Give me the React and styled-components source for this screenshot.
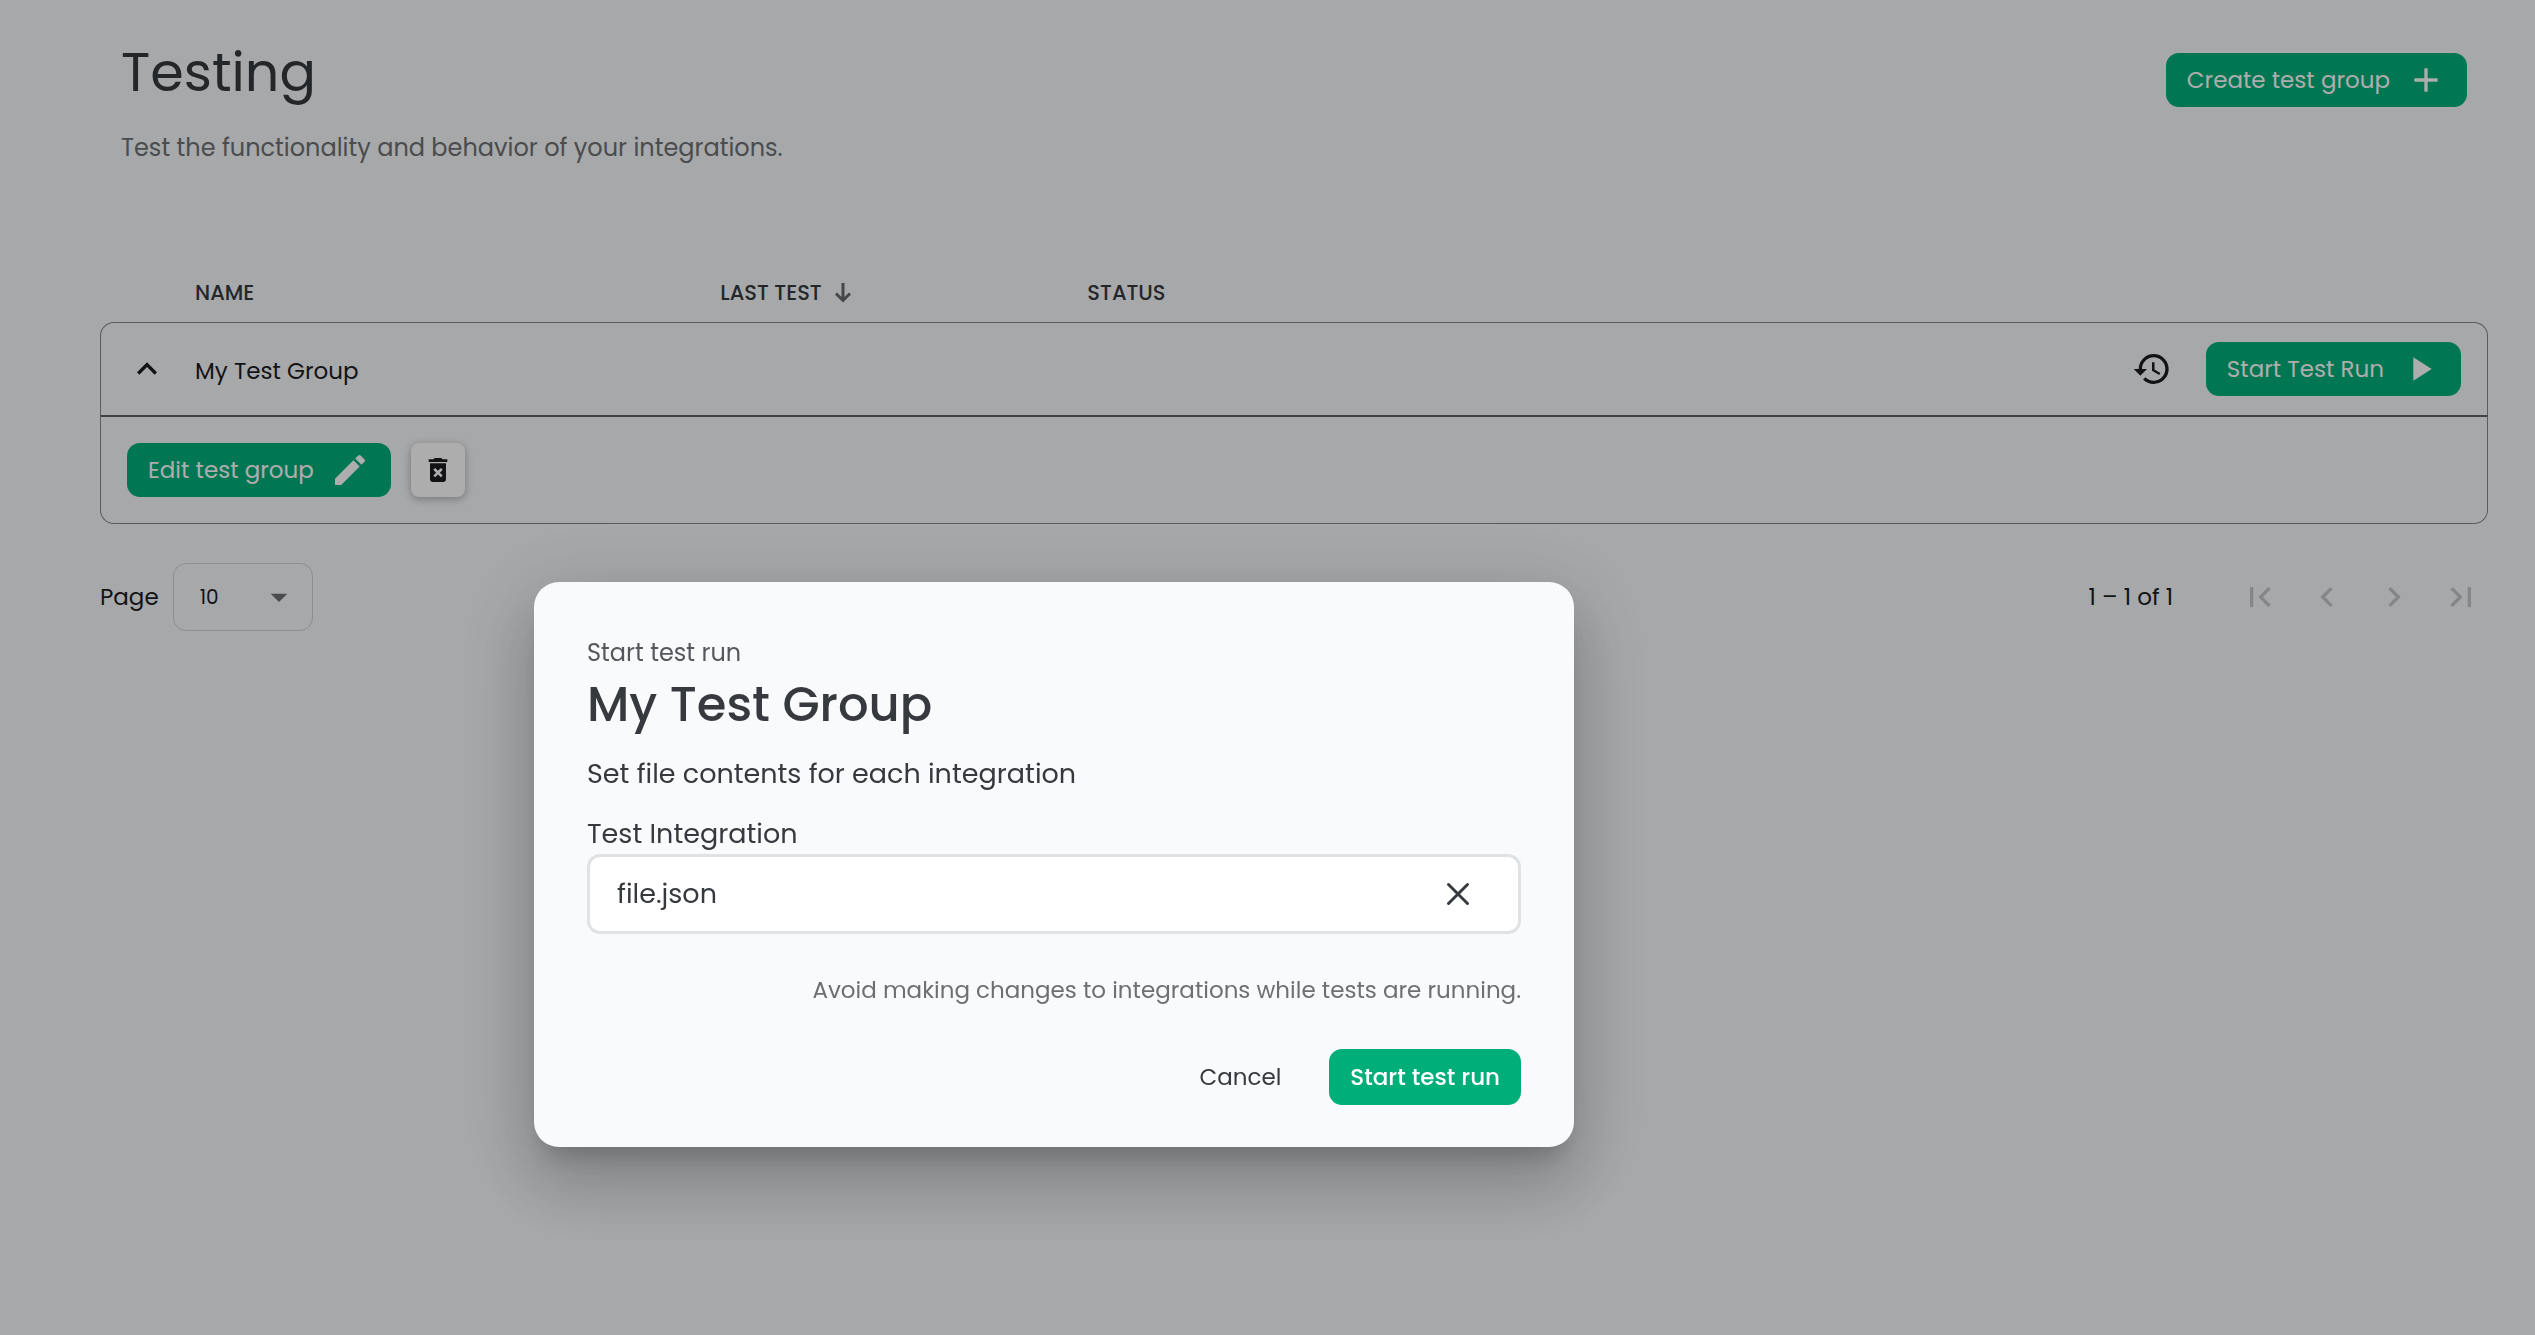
import React, { useState } from "react";
import styled, { createGlobalStyle, css } from "styled-components";
import {
  MdAdd,
  MdArrowDropDown,
  MdChevronLeft,
  MdChevronRight,
  MdDeleteForever,
  MdEdit,
  MdExpandLess,
  MdFirstPage,
  MdHistory,
  MdLastPage,
  MdPlayArrow,
} from "react-icons/md";

const color = {
  page: "#f6f8fb",
  dialog: "#f9fafc",
  green: "#00ae7a",
  ink: "#363a3e",
  muted: "#6d7073",
  line: "#85878b",
};

const GlobalStyle = createGlobalStyle`
  *, *::before, *::after { box-sizing: border-box; }
  body {
    margin: 0;
    background: ${color.page};
    color: ${color.ink};
    font-family: Poppins, Inter, "Open Sans", sans-serif;
    font-size: 24px;
    line-height: 36px;
  }
  button, input, select { font: inherit; color: inherit; }
  button { border: 0; background: none; padding: 0; cursor: pointer; }
  svg { display: block; flex: none; }
`;

const Page = styled.main`
  min-height: 100vh;
  padding: 40px 47px 40px 100px;
`;

const PageHeader = styled.header`
  display: flex;
  justify-content: space-between;
  align-items: flex-start;
  padding: 0 21px;
  margin-bottom: 98px;
`;

const PageTitle = styled.h1`
  margin: 0 0 26px;
  font-size: 54px;
  font-weight: 400;
  line-height: 64px;
`;

const Subtitle = styled.p`
  margin: 0;
  color: ${color.muted};
`;

const HeaderActions = styled.div`
  padding-top: 13px;
`;

const PrimaryButton = styled.button`
  display: inline-flex;
  align-items: center;
  gap: 16px;
  height: 54px;
  padding: 0 21px;
  border-radius: 13px;
  background: ${color.green};
  color: #fff;
  font-size: 23px;
  white-space: nowrap;
  ${(p) =>
    p.$strong &&
    css`
      height: 56px;
      font-weight: 500;
    `}
`;

const SquareButton = styled.button`
  display: grid;
  place-items: center;
  width: 54px;
  height: 54px;
  border-radius: 8px;
  background: #fff;
  color: #1c1d1f;
  box-shadow: 0 2px 8px rgba(0, 0, 0, 0.3);
`;

const IconButton = styled.button`
  display: grid;
  place-items: center;
  width: 40px;
  height: 40px;
  color: #1c1d1f;
`;

const GroupTable = styled.table`
  width: 100%;
  table-layout: fixed;
  border-collapse: separate;
  border-spacing: 0;
  text-align: left;
`;

const Col = styled.col`
  width: ${(p) => p.$width};
`;

const HeadCell = styled.th`
  padding: 13px 0;
  font-size: 21px;
  font-weight: 500;
  line-height: 32px;
`;

const SortLabel = styled.button`
  display: inline-flex;
  align-items: center;
  gap: 12px;
`;

const Cell = styled.td`
  height: 93px;
  padding: 0;
  border-top: 1px solid ${color.line};
  color: #1c1d1f;
  &:first-child {
    padding-left: 26px;
    border-left: 1px solid ${color.line};
    border-top-left-radius: 14px;
  }
  &:last-child {
    padding-right: 26px;
    border-right: 1px solid ${color.line};
    border-top-right-radius: 14px;
  }
`;

const NameCell = styled(Cell)`
  padding-top: 4px;
  font-size: 23px;
`;

const DetailCell = styled.td`
  padding: 26px;
  border: 1px solid ${color.line};
  border-top: 2px solid #606266;
  border-radius: 0 0 14px 14px;
`;

const Actions = styled.div`
  display: flex;
  align-items: center;
  justify-content: ${(p) => (p.$end ? "flex-end" : "flex-start")};
  gap: ${(p) => p.$gap}px;
`;

const Pager = styled.nav`
  display: flex;
  align-items: center;
  justify-content: space-between;
  margin-top: 39px;
  color: #1c1d1f;
  font-size: 23px;
`;

const PageSize = styled.label`
  display: flex;
  align-items: center;
  gap: 14px;
`;

const SelectBox = styled.span`
  display: grid;
  align-items: center;
  > * {
    grid-area: 1 / 1;
  }
  > svg {
    justify-self: end;
    margin-right: 14px;
    color: #6d7073;
    pointer-events: none;
  }
`;

const Select = styled.select`
  appearance: none;
  width: 140px;
  height: 68px;
  padding: 0 26px;
  border: 1px solid #cdd0d3;
  border-radius: 13px;
  background: transparent;
  font-size: 20px;
`;

const PagerControls = styled.div`
  display: flex;
  align-items: center;
  gap: 27px;
  padding-right: 7px;
`;

const Range = styled.span`
  margin-right: 40px;
`;

const PageButton = styled(IconButton)`
  color: #c4c6c8;
  &:disabled {
    cursor: default;
  }
`;

/* The dialog is centred in the area left of the side inset and below the top inset. */
const Backdrop = styled.div`
  position: fixed;
  inset: 0;
  display: grid;
  place-items: center;
  padding: 394px 427px 0 0;
  background: rgba(0, 0, 0, 0.32);
`;

const Dialog = styled.section`
  width: 1040px;
  max-width: 100%;
  padding: 53px 53px 42px;
  border-radius: 25px;
  background: ${color.dialog};
  box-shadow:
    0 18px 25px -12px rgba(0, 0, 0, 0.2),
    0 40px 63px 5px rgba(0, 0, 0, 0.14),
    0 15px 77px 13px rgba(0, 0, 0, 0.12);
`;

const Eyebrow = styled.p`
  margin: 0 0 4px;
  color: #54585c;
`;

const DialogTitle = styled.h2`
  margin: 0 0 19px;
  font-size: 48px;
  font-weight: 500;
  line-height: 60px;
`;

const Instruction = styled.p`
  margin: 0 0 20px;
  font-size: 27px;
  line-height: 40px;
`;

const FieldLabel = styled.label`
  display: block;
  font-size: 27px;
  line-height: 40px;
`;

const Field = styled.div`
  display: flex;
  align-items: center;
  height: 80px;
  padding: 0 40px 0 27px;
  border: 3px solid #e0e2e3;
  border-radius: 13px;
  background: #fff;
`;

const FieldInput = styled.input`
  flex: 1;
  min-width: 0;
  padding: 0;
  border: 0;
  outline: 0;
  background: none;
  font-size: 27px;
  line-height: 40px;
`;

const Warning = styled.p`
  margin: 38px 0 41px;
  color: ${color.muted};
  font-size: 23px;
  text-align: right;
`;

const CancelButton = styled.button`
  font-size: 23px;
`;

function SortArrow() {
  return (
    <svg width="18" height="20" viewBox="0 0 18 20" fill="none" stroke="#66696c" strokeWidth="3">
      <path d="M9 0v17M2 10.5l7 7 7-7" />
    </svg>
  );
}

function CloseIcon() {
  return (
    <svg width="24" height="24" viewBox="0 0 24 24" fill="none" stroke="#363a3e" strokeWidth="3" strokeLinecap="round">
      <path d="M2.5 2.5l19 19M21.5 2.5l-19 19" />
    </svg>
  );
}

export default function App() {
  const [file, setFile] = useState("file.json");

  return (
    <>
      <GlobalStyle />
      <Page>
        <PageHeader>
          <div>
            <PageTitle>Testing</PageTitle>
            <Subtitle>Test the functionality and behavior of your integrations.</Subtitle>
          </div>
          <HeaderActions>
            <PrimaryButton type="button">
              Create test group
              <MdAdd size={40} />
            </PrimaryButton>
          </HeaderActions>
        </PageHeader>

        <GroupTable>
          <colgroup>
            <Col $width="95px" />
            <Col $width="22%" />
            <Col $width="367px" />
            <Col $width="auto" />
            <Col $width="auto" />
          </colgroup>
          <thead>
            <tr>
              <HeadCell aria-label="Expand" />
              <HeadCell>NAME</HeadCell>
              <HeadCell>
                <SortLabel type="button">
                  LAST TEST
                  <SortArrow />
                </SortLabel>
              </HeadCell>
              <HeadCell>STATUS</HeadCell>
              <HeadCell aria-label="Actions" />
            </tr>
          </thead>
          <tbody>
            <tr>
              <Cell>
                <IconButton type="button" aria-label="Collapse row">
                  <MdExpandLess size={40} />
                </IconButton>
              </Cell>
              <NameCell>My Test Group</NameCell>
              <Cell />
              <Cell />
              <Cell>
                <Actions $end $gap={34}>
                  <IconButton type="button" aria-label="Test history">
                    <MdHistory size={40} />
                  </IconButton>
                  <PrimaryButton type="button">
                    Start Test Run
                    <MdPlayArrow size={40} />
                  </PrimaryButton>
                </Actions>
              </Cell>
            </tr>
            <tr>
              <DetailCell colSpan={5}>
                <Actions $gap={20}>
                  <PrimaryButton type="button">
                    Edit test group
                    <MdEdit size={40} />
                  </PrimaryButton>
                  <SquareButton type="button" aria-label="Delete test group">
                    <MdDeleteForever size={32} />
                  </SquareButton>
                </Actions>
              </DetailCell>
            </tr>
          </tbody>
        </GroupTable>

        <Pager aria-label="Pagination">
          <PageSize>
            Page
            <SelectBox>
              <Select defaultValue="10">
                <option>10</option>
                <option>25</option>
                <option>50</option>
              </Select>
              <MdArrowDropDown size={40} />
            </SelectBox>
          </PageSize>
          <PagerControls>
            <Range>1 – 1 of 1</Range>
            <PageButton type="button" disabled aria-label="First page">
              <MdFirstPage size={40} />
            </PageButton>
            <PageButton type="button" disabled aria-label="Previous page">
              <MdChevronLeft size={40} />
            </PageButton>
            <PageButton type="button" disabled aria-label="Next page">
              <MdChevronRight size={40} />
            </PageButton>
            <PageButton type="button" disabled aria-label="Last page">
              <MdLastPage size={40} />
            </PageButton>
          </PagerControls>
        </Pager>
      </Page>

      <Backdrop>
        <Dialog role="dialog" aria-modal="true" aria-labelledby="dialog-title">
          <Eyebrow>Start test run</Eyebrow>
          <DialogTitle id="dialog-title">My Test Group</DialogTitle>
          <Instruction>Set file contents for each integration</Instruction>
          <FieldLabel htmlFor="integration-file">Test Integration</FieldLabel>
          <Field>
            <FieldInput
              id="integration-file"
              type="text"
              value={file}
              onChange={(e) => setFile(e.target.value)}
            />
            <IconButton type="button" aria-label="Clear file" onClick={() => setFile("")}>
              <CloseIcon />
            </IconButton>
          </Field>
          <Warning>Avoid making changes to integrations while tests are running.</Warning>
          <Actions $end $gap={48}>
            <CancelButton type="button">Cancel</CancelButton>
            <PrimaryButton type="button" $strong>
              Start test run
            </PrimaryButton>
          </Actions>
        </Dialog>
      </Backdrop>
    </>
  );
}
